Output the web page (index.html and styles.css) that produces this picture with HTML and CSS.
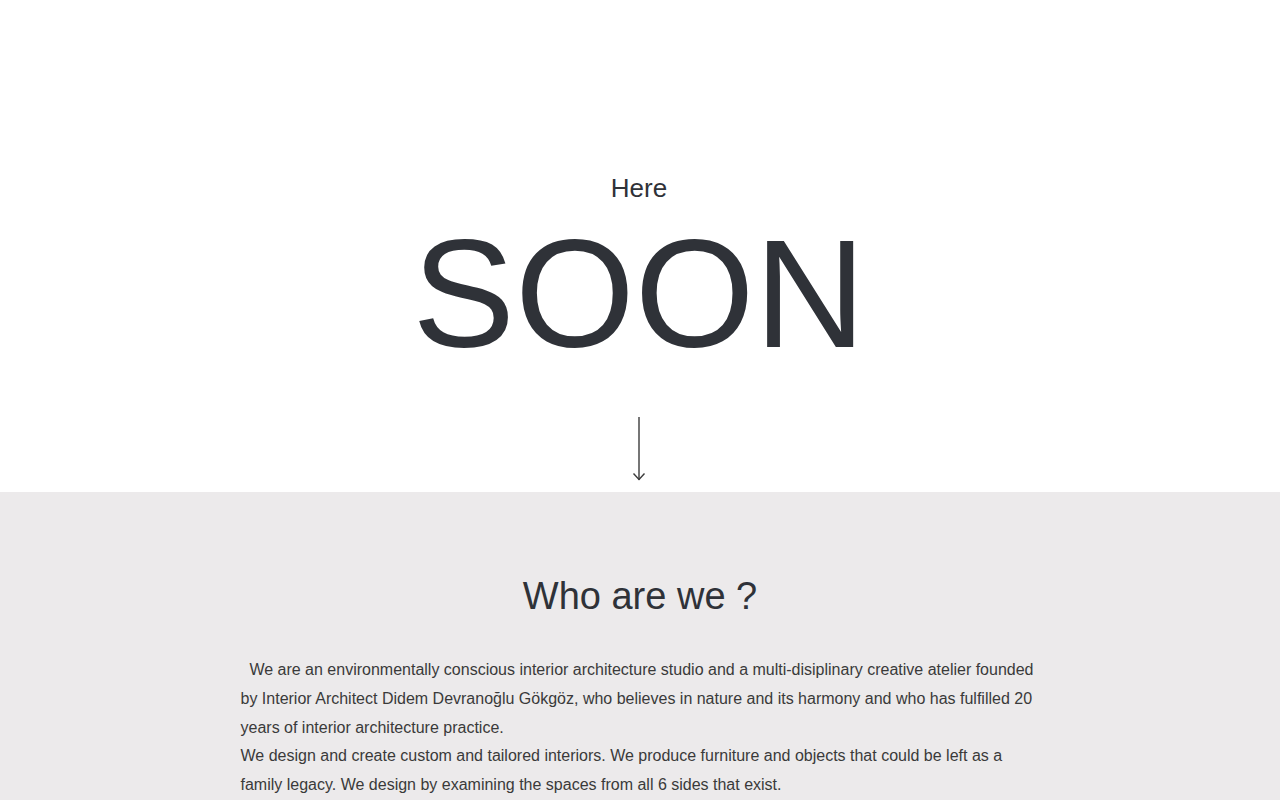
FILE: index.html
```html
<!DOCTYPE html>
<html lang="en">
<head>
<meta charset="utf-8">
<title>Soon</title>
<link rel="stylesheet" href="styles.css">
</head>
<body>
<section class="hero">
  <div class="here">Here</div>
  <h1 class="soon">SOON</h1>
  <svg class="arrow" width="14" height="64" viewBox="0 0 14 64" aria-hidden="true">
    <line x1="7" y1="0" x2="7" y2="63" stroke="#3c3c3c" stroke-width="1.4"/>
    <polyline points="1.5,56.5 7,62.5 12.5,56.5" fill="none" stroke="#3c3c3c" stroke-width="1.4"/>
  </svg>
</section>
<section class="about">
  <h2 class="about-title">Who are we ?</h2>
  <p class="about-text">&nbsp;&nbsp;We are an environmentally conscious interior architecture studio and a multi-disiplinary creative atelier founded by Interior Architect Didem Devranoğlu Gökgöz, who believes in nature and its harmony and who has fulfilled 20 years of interior architecture practice.<br>We design and create custom and tailored interiors. We produce furniture and objects that could be left as a family legacy. We design by examining the spaces from all 6 sides that exist.</p>
</section>
</body>
</html>
```

FILE: styles.css
```css
html, body {
  margin: 0;
  padding: 0;
}
body {
  font-family: "Liberation Sans", Arial, sans-serif;
  color: #2f3238;
  background: #ffffff;
}
.hero {
  height: 492px;
  box-sizing: border-box;
  padding: 173px 2px 0 0;
  display: flex;
  flex-direction: column;
  align-items: center;
}
.here {
  font-size: 26px;
  line-height: 30px;
  margin-bottom: 11px;
  color: #2f3238;
}
.soon {
  margin: 0;
  font-size: 154px;
  font-weight: 400;
  line-height: 160px;
  color: #2f3238;
}
.arrow {
  display: block;
  margin: 43px 1px 0 0;
}
.about {
  background: #eceaeb;
  padding: 80px 0 40px;
  display: flex;
  flex-direction: column;
  align-items: center;
}
.about-title {
  margin: 0 0 36px;
  font-size: 38px;
  font-weight: 400;
  line-height: 48px;
  color: #2f3238;
}
.about-text {
  margin: 0 0 0 1px;
  width: 800px;
  font-size: 16px;
  line-height: 28.8px;
  color: #3a3a3a;
}
```
